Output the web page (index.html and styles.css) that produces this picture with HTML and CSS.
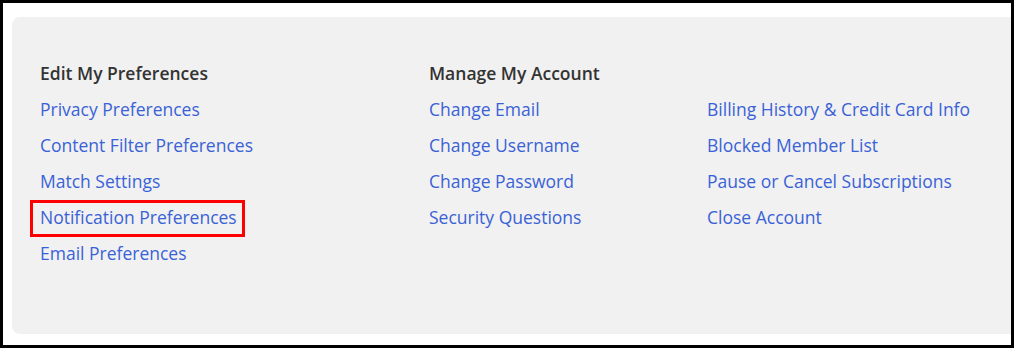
FILE: index.html
```html
<!DOCTYPE html>
<html lang="en">
<head>
    <meta charset="UTF-8">
    <meta name="viewport" content="width=device-width, initial-scale=1.0">
    <title>Account Settings</title>
    <link rel="stylesheet" href="styles.css">
</head>
<body>
    <div class="settings">
        <div class="column first">
            <h3>Edit My Preferences</h3>
            <a href="#">Privacy Preferences</a>
            <a href="#">Content Filter Preferences</a>
            <a href="#">Match Settings</a>
            <a href="#" class="highlight">Notification Preferences</a>
            <a href="#">Email Preferences</a>
        </div>
        <div class="column second">
            <h3>Manage My Account</h3>
            <a href="#">Change Email</a>
            <a href="#">Change Username</a>
            <a href="#">Change Password</a>
            <a href="#">Security Questions</a>
        </div>
        <div class="column third">
            <h3>&nbsp;</h3>
            <a href="#">Billing History &amp; Credit Card Info</a>
            <a href="#">Blocked Member List</a>
            <a href="#">Pause or Cancel Subscriptions</a>
            <a href="#">Close Account</a>
        </div>
    </div>
</body>
</html>
```

FILE: styles.css
```css
html, body {
    margin: 0;
    height: 100%;
}
body {
    box-sizing: border-box;
    border: 3px solid #000;
    background: #fff;
    font-family: "Open Sans", "Liberation Sans", sans-serif;
    overflow: hidden;
    padding: 14px 0 11px 9px;
}
.settings {
    display: grid;
    grid-template-columns: 389px 278px 1fr;
    height: 100%;
    box-sizing: border-box;
    background-color: #f1f1f1;
    border-radius: 8px 0 0 8px;
    padding: 38px 0 0 28px;
    margin-right: -10px;
}
.column {
    display: flex;
    flex-direction: column;
    align-items: flex-start;
}
h3 {
    margin: 0;
    font-size: 17.5px;
    font-weight: 600;
    line-height: 36px;
    color: #333;
}
a {
    font-size: 17.5px;
    line-height: 36px;
    color: #3a62d7;
    text-decoration: none;
    white-space: nowrap;
}
.highlight {
    position: relative;
}
.highlight::after {
    content: "";
    position: absolute;
    left: -10px;
    right: -8px;
    top: 1px;
    bottom: -2px;
    border: 3px solid #f00;
}
```
